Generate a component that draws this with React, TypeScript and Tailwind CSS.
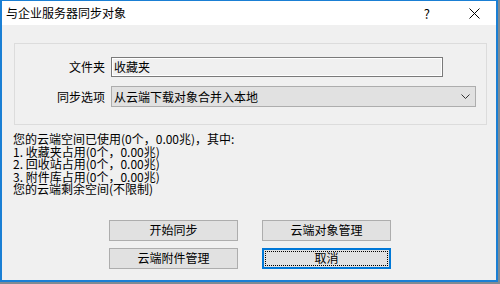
import React from "react";

const font = { fontFamily: '"Noto Sans CJK SC", "Microsoft YaHei", sans-serif' };

function Btn({ children, focused }: { children: React.ReactNode; focused?: boolean }) {
  return (
    <div
      className={
        "relative flex h-[21px] w-[129px] items-center justify-center bg-[#e1e1e1] text-[12px] leading-none text-black " +
        (focused ? "border-2 border-[#0078d7]" : "border border-[#adadad]")
      }
    >
      {focused && <span className="absolute inset-[1px] border border-dotted border-black" />}
      <span className="relative">{children}</span>
    </div>
  );
}

export default function App() {
  return (
    <div className="h-[284px] w-[500px] overflow-hidden bg-[#7f8b93]" style={font}>
      <div className="flex h-[282px] w-[498px] flex-col border-x-2 border-b-2 border-t border-[#1a7fd4] bg-[#f0f0f0]">
        {/* title bar */}
        <div className="flex h-[24px] shrink-0 items-center bg-white pl-[4px] text-[12px] leading-none text-black">
          <span className="flex-1">与企业服务器同步对象</span>
          <span className="mr-[39px] text-[13px]">?</span>
          <svg width="11" height="11" viewBox="0 0 11 11" className="mr-[16px]">
            <path d="M0.5 0.5L10.5 10.5M10.5 0.5L0.5 10.5" stroke="#000" strokeWidth="1" />
          </svg>
        </div>

        {/* group box */}
        <div className="ml-[12px] mr-[9px] mt-[18px] flex h-[82px] flex-col border border-[#dcdcdc] pt-[13px]">
          <div className="flex items-center">
            <div className="w-[91px] pr-[1px] text-right text-[12px] leading-none text-black">文件夹</div>
            <div className="ml-[5px] flex h-[20px] w-[332px] items-center border border-[#7a7a7a] bg-[#f0f0f0] pl-[2px] text-[12px] leading-none text-black shadow-[inset_0_0_0_1px_#ffffff]">
              收藏夹
            </div>
          </div>
          <div className="mt-[9px] flex items-center">
            <div className="w-[91px] pr-[1px] text-right text-[12px] leading-none text-black">同步选项</div>
            <div className="ml-[5px] flex h-[21px] w-[365px] items-center justify-between border border-[#adadad] bg-[#e1e1e1] pl-[2px] pr-[5px] text-[12px] leading-none text-black">
              <span>从云端下载对象合并入本地</span>
              <svg width="9" height="6" viewBox="0 0 9 6">
                <path d="M0.5 0.5L4.5 4.5L8.5 0.5" stroke="#333" strokeWidth="1" fill="none" />
              </svg>
            </div>
          </div>
        </div>

        {/* info text */}
        <div className="ml-[11px] mt-[8px] text-[12px] leading-[12.5px] text-black">
          <div>您的云端空间已使用(0个，0.00兆)，其中:</div>
          <div>1. 收藏夹占用(0个，0.00兆)</div>
          <div>2. 回收站占用(0个，0.00兆)</div>
          <div>3. 附件库占用(0个，0.00兆)</div>
          <div>您的云端剩余空间(不限制)</div>
        </div>

        {/* buttons */}
        <div className="ml-[107px] mt-[24px] grid w-[282px] grid-cols-[129px_129px] gap-x-[24px] gap-y-[7px]">
          <Btn>开始同步</Btn>
          <Btn>云端对象管理</Btn>
          <Btn>云端附件管理</Btn>
          <Btn focused>取消</Btn>
        </div>
      </div>
    </div>
  );
}
